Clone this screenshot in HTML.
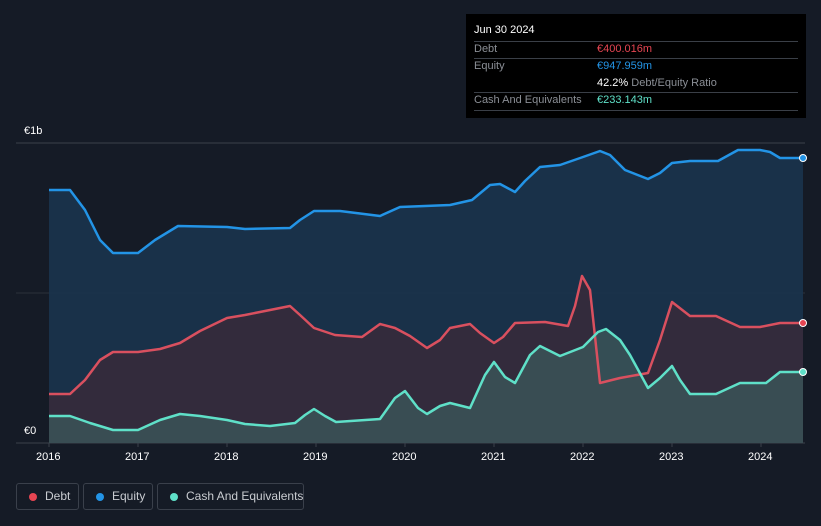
<!DOCTYPE html>
<html><head><meta charset="utf-8"><style>
html,body{margin:0;background:#151b26;width:821px;height:526px;overflow:hidden;font-family:"Liberation Sans",sans-serif;position:relative}
.tip{position:absolute;left:466px;top:14px;width:340px;height:104px;background:#000;}
.tip .r{position:absolute;left:8px;right:8px;font-size:11px;color:#8b8f96;height:17px;line-height:17px;white-space:nowrap}
.lg{position:absolute;top:483px;height:27px;border:1px solid #3a404b;border-radius:3px;color:#c9ccd1;font-size:12px;line-height:25px;box-sizing:border-box;white-space:nowrap}
.lg i{position:absolute;left:12px;top:9px;width:8px;height:8px;border-radius:50%}
.ax{position:absolute;top:451px;color:#fff;font-size:11px}
</style></head><body>
<svg width="821" height="526" style="position:absolute;left:0;top:0">
<line x1="16" y1="143" x2="805" y2="143" stroke="#3a404b"/>
<line x1="16" y1="293" x2="805" y2="293" stroke="#2a303b"/>
<line x1="16" y1="443" x2="805" y2="443" stroke="#3a404b"/>
<path d="M49,190 L70,190 85,210 100,240 113,253 138,253 155,240 178,226 227,227 245,229 290,228 300,220 314,211 340,211 380,216 400,207 450,205 472,200 490,185 500,184 515,192 525,181 540,167 560,165 583,157 600,151 610,155 625,170 648,179 660,173 672,163 690,161 718,161 738,150 760,150 770,152 780,158 803,158 L803,443 49,443Z" fill="#1a3550" fill-opacity="0.85"/>
<path d="M49,394 L70,394 85,380 100,360 113,352 138,352 160,349 180,343 200,331 227,318 245,315 270,310 290,306 300,315 314,328 335,335 362,337 380,324 395,328 410,336 427,348 440,340 450,328 470,324 480,333 494,343 503,337 515,323 545,322 568,326 575,306 582,276 590,290 600,383 620,378 648,373 660,340 672,302 690,316 716,316 740,327 760,327 780,323 803,323 L803,443 49,443Z" fill="#3a2a3a" fill-opacity="0.8"/>
<path d="M49,416 L70,416 90,423 113,430 138,430 160,420 180,414 200,416 227,420 245,424 270,426 295,423 305,415 314,409 325,416 336,422 380,419 395,398 405,391 418,408 427,414 440,406 450,403 470,408 485,375 494,362 505,377 515,383 530,355 540,346 560,356 583,347 598,332 606,329 620,340 630,355 648,388 660,378 672,366 680,380 690,394 716,394 740,383 766,383 780,372 803,372 L803,443 49,443Z" fill="#3b5457" fill-opacity="0.85"/>
<path d="M49,190 L70,190 85,210 100,240 113,253 138,253 155,240 178,226 227,227 245,229 290,228 300,220 314,211 340,211 380,216 400,207 450,205 472,200 490,185 500,184 515,192 525,181 540,167 560,165 583,157 600,151 610,155 625,170 648,179 660,173 672,163 690,161 718,161 738,150 760,150 770,152 780,158 803,158" fill="none" stroke="#2394e6" stroke-width="2.5" stroke-linejoin="round"/>
<path d="M49,394 L70,394 85,380 100,360 113,352 138,352 160,349 180,343 200,331 227,318 245,315 270,310 290,306 300,315 314,328 335,335 362,337 380,324 395,328 410,336 427,348 440,340 450,328 470,324 480,333 494,343 503,337 515,323 545,322 568,326 575,306 582,276 590,290 600,383 620,378 648,373 660,340 672,302 690,316 716,316 740,327 760,327 780,323 803,323" fill="none" stroke="#d9505f" stroke-width="2.5" stroke-linejoin="round"/>
<path d="M49,416 L70,416 90,423 113,430 138,430 160,420 180,414 200,416 227,420 245,424 270,426 295,423 305,415 314,409 325,416 336,422 380,419 395,398 405,391 418,408 427,414 440,406 450,403 470,408 485,375 494,362 505,377 515,383 530,355 540,346 560,356 583,347 598,332 606,329 620,340 630,355 648,388 660,378 672,366 680,380 690,394 716,394 740,383 766,383 780,372 803,372" fill="none" stroke="#5fe0c8" stroke-width="2.5" stroke-linejoin="round"/>
<circle cx="803" cy="158" r="3.5" fill="#2394e6" stroke="#fff" stroke-width="1"/>
<circle cx="803" cy="323" r="3.5" fill="#e64552" stroke="#fff" stroke-width="1"/>
<circle cx="803" cy="372" r="3.5" fill="#5fe0c8" stroke="#fff" stroke-width="1"/>
<g stroke="#3a404b"><line x1="49" y1="443" x2="49" y2="447"/><line x1="138" y1="443" x2="138" y2="447"/><line x1="227" y1="443" x2="227" y2="447"/><line x1="316" y1="443" x2="316" y2="447"/><line x1="405" y1="443" x2="405" y2="447"/><line x1="494" y1="443" x2="494" y2="447"/><line x1="583" y1="443" x2="583" y2="447"/><line x1="672" y1="443" x2="672" y2="447"/><line x1="761" y1="443" x2="761" y2="447"/></g>
</svg>
<div style="position:absolute;left:24px;top:125px;color:#fff;font-size:11px">€1b</div>
<div style="position:absolute;left:24px;top:425px;color:#fff;font-size:11px">€0</div>
<div class="ax" style="left:36px">2016</div><div class="ax" style="left:125px">2017</div><div class="ax" style="left:214px">2018</div><div class="ax" style="left:303px">2019</div><div class="ax" style="left:392px">2020</div><div class="ax" style="left:481px">2021</div><div class="ax" style="left:570px">2022</div><div class="ax" style="left:659px">2023</div><div class="ax" style="left:748px">2024</div>
<div class="tip">
<div class="r" style="top:8px;color:#fff">Jun 30 2024</div>
<div style="position:absolute;left:8px;right:8px;top:27px;border-top:1px solid #3a3f47"></div>
<div class="r" style="top:27px">Debt<span style="position:absolute;left:123px;color:#e64552">€400.016m</span></div>
<div style="position:absolute;left:8px;right:8px;top:44px;border-top:1px solid #3a3f47"></div>
<div class="r" style="top:44px">Equity<span style="position:absolute;left:123px;color:#2394e6">€947.959m</span></div>
<div class="r" style="top:61px"><span style="position:absolute;left:123px"><b style="color:#fff;font-weight:normal">42.2%</b> Debt/Equity Ratio</span></div>
<div style="position:absolute;left:8px;right:8px;top:78px;border-top:1px solid #3a3f47"></div>
<div class="r" style="top:78px">Cash And Equivalents<span style="position:absolute;left:123px;color:#5fe0c8">€233.143m</span></div>
<div style="position:absolute;left:8px;right:8px;top:96px;border-top:1px solid #3a3f47"></div>
</div>
<div class="lg" style="left:16px;width:63px"><i style="background:#e64552"></i><span style="position:absolute;left:28px">Debt</span></div>
<div class="lg" style="left:83px;width:70px"><i style="background:#2394e6"></i><span style="position:absolute;left:28px">Equity</span></div>
<div class="lg" style="left:157px;width:147px"><i style="background:#5fe0c8"></i><span style="position:absolute;left:28px">Cash And Equivalents</span></div>
</body></html>
